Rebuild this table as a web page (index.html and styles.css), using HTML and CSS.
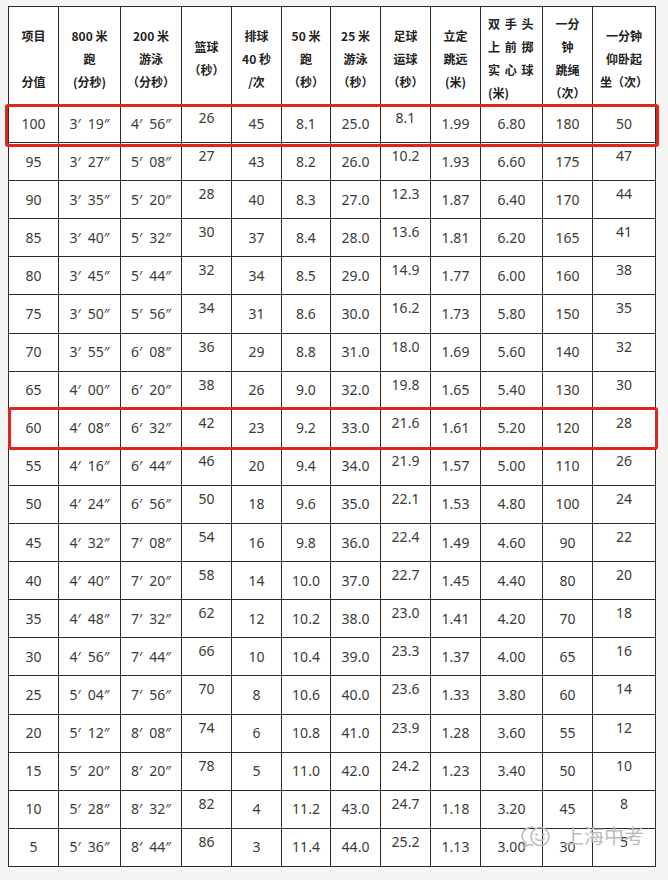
FILE: index.html
```html
<!DOCTYPE html>
<html lang="zh-CN">
<head>
<meta charset="utf-8">
<title>体育成绩评分标准</title>
<link rel="stylesheet" href="styles.css">
</head>
<body>
<div class="sheet">
<table class="score">
<colgroup>
<col class="w50"><col class="w62"><col class="w61"><col class="w50"><col class="w50"><col class="w49"><col class="w50"><col class="w50"><col class="w50"><col class="w62"><col class="w50"><col class="w63">
</colgroup>
<thead>
<tr>
<th>项目<br><br>分值</th>
<th>800 米<br>跑<br>(分秒)</th>
<th>200 米<br>游泳<br>（分秒）</th>
<th>篮球<br>（秒）</th>
<th>排球<br>40 秒<br>/次</th>
<th>50 米<br>跑<br>（秒）</th>
<th>25 米<br>游泳<br>（秒）</th>
<th>足球<br>运球<br>（秒）</th>
<th>立定<br>跳远<br>(米)</th>
<th class="left">双 手 头<br>上 前 掷<br>实 心 球<br>(米)</th>
<th>一分<br>钟<br>跳绳<br>（次）</th>
<th>一分钟<br>仰卧起<br>坐（次）</th>
</tr>
</thead>
<tbody>
<tr><td>100</td><td>3′&ensp;19″</td><td>4′&ensp;56″</td><td class="top">26</td><td>45</td><td>8.1</td><td>25.0</td><td class="top">8.1</td><td>1.99</td><td>6.80</td><td>180</td><td>50</td></tr>
<tr><td>95</td><td>3′&ensp;27″</td><td>5′&ensp;08″</td><td class="top">27</td><td>43</td><td>8.2</td><td>26.0</td><td class="top">10.2</td><td>1.93</td><td>6.60</td><td>175</td><td class="top">47</td></tr>
<tr><td>90</td><td>3′&ensp;35″</td><td>5′&ensp;20″</td><td class="top">28</td><td>40</td><td>8.3</td><td>27.0</td><td class="top">12.3</td><td>1.87</td><td>6.40</td><td>170</td><td class="top">44</td></tr>
<tr><td>85</td><td>3′&ensp;40″</td><td>5′&ensp;32″</td><td class="top">30</td><td>37</td><td>8.4</td><td>28.0</td><td class="top">13.6</td><td>1.81</td><td>6.20</td><td>165</td><td class="top">41</td></tr>
<tr><td>80</td><td>3′&ensp;45″</td><td>5′&ensp;44″</td><td class="top">32</td><td>34</td><td>8.5</td><td>29.0</td><td class="top">14.9</td><td>1.77</td><td>6.00</td><td>160</td><td class="top">38</td></tr>
<tr><td>75</td><td>3′&ensp;50″</td><td>5′&ensp;56″</td><td class="top">34</td><td>31</td><td>8.6</td><td>30.0</td><td class="top">16.2</td><td>1.73</td><td>5.80</td><td>150</td><td class="top">35</td></tr>
<tr><td>70</td><td>3′&ensp;55″</td><td>6′&ensp;08″</td><td class="top">36</td><td>29</td><td>8.8</td><td>31.0</td><td class="top">18.0</td><td>1.69</td><td>5.60</td><td>140</td><td class="top">32</td></tr>
<tr><td>65</td><td>4′&ensp;00″</td><td>6′&ensp;20″</td><td class="top">38</td><td>26</td><td>9.0</td><td>32.0</td><td class="top">19.8</td><td>1.65</td><td>5.40</td><td>130</td><td class="top">30</td></tr>
<tr><td>60</td><td>4′&ensp;08″</td><td>6′&ensp;32″</td><td class="top">42</td><td>23</td><td>9.2</td><td>33.0</td><td class="top">21.6</td><td>1.61</td><td>5.20</td><td>120</td><td class="top">28</td></tr>
<tr><td>55</td><td>4′&ensp;16″</td><td>6′&ensp;44″</td><td class="top">46</td><td>20</td><td>9.4</td><td>34.0</td><td class="top">21.9</td><td>1.57</td><td>5.00</td><td>110</td><td class="top">26</td></tr>
<tr><td>50</td><td>4′&ensp;24″</td><td>6′&ensp;56″</td><td class="top">50</td><td>18</td><td>9.6</td><td>35.0</td><td class="top">22.1</td><td>1.53</td><td>4.80</td><td>100</td><td class="top">24</td></tr>
<tr><td>45</td><td>4′&ensp;32″</td><td>7′&ensp;08″</td><td class="top">54</td><td>16</td><td>9.8</td><td>36.0</td><td class="top">22.4</td><td>1.49</td><td>4.60</td><td>90</td><td class="top">22</td></tr>
<tr><td>40</td><td>4′&ensp;40″</td><td>7′&ensp;20″</td><td class="top">58</td><td>14</td><td>10.0</td><td>37.0</td><td class="top">22.7</td><td>1.45</td><td>4.40</td><td>80</td><td class="top">20</td></tr>
<tr><td>35</td><td>4′&ensp;48″</td><td>7′&ensp;32″</td><td class="top">62</td><td>12</td><td>10.2</td><td>38.0</td><td class="top">23.0</td><td>1.41</td><td>4.20</td><td>70</td><td class="top">18</td></tr>
<tr><td>30</td><td>4′&ensp;56″</td><td>7′&ensp;44″</td><td class="top">66</td><td>10</td><td>10.4</td><td>39.0</td><td class="top">23.3</td><td>1.37</td><td>4.00</td><td>65</td><td class="top">16</td></tr>
<tr><td>25</td><td>5′&ensp;04″</td><td>7′&ensp;56″</td><td class="top">70</td><td>8</td><td>10.6</td><td>40.0</td><td class="top">23.6</td><td>1.33</td><td>3.80</td><td>60</td><td class="top">14</td></tr>
<tr><td>20</td><td>5′&ensp;12″</td><td>8′&ensp;08″</td><td class="top">74</td><td>6</td><td>10.8</td><td>41.0</td><td class="top">23.9</td><td>1.28</td><td>3.60</td><td>55</td><td class="top">12</td></tr>
<tr><td>15</td><td>5′&ensp;20″</td><td>8′&ensp;20″</td><td class="top">78</td><td>5</td><td>11.0</td><td>42.0</td><td class="top">24.2</td><td>1.23</td><td>3.40</td><td>50</td><td class="top">10</td></tr>
<tr><td>10</td><td>5′&ensp;28″</td><td>8′&ensp;32″</td><td class="top">82</td><td>4</td><td>11.2</td><td>43.0</td><td class="top">24.7</td><td>1.18</td><td>3.20</td><td>45</td><td class="top">8</td></tr>
<tr><td>5</td><td>5′&ensp;36″</td><td>8′&ensp;44″</td><td class="top">86</td><td>3</td><td>11.4</td><td>44.0</td><td class="top">25.2</td><td>1.13</td><td>3.00</td><td>30</td><td class="top">5</td></tr>
</tbody>
</table>
<div class="mark mark-100"></div>
<div class="mark mark-60"></div>
<div class="watermark">
<svg class="wm-icon" width="36" height="24" viewBox="0 0 36 24" aria-hidden="true">
<path d="M14 3 C7 3 3 7.5 3 12 C3 15 4.6 17.4 7 19 L6 22.5 L10 20.5 C11.3 20.9 12.6 21 14 21" fill="none" stroke="#bdbdbd" stroke-width="1.6" stroke-linecap="round"/>
<circle cx="21" cy="12.5" r="9" fill="none" stroke="#bdbdbd" stroke-width="1.6"/>
<circle cx="17.5" cy="10.5" r="1.2" fill="#bdbdbd"/>
<circle cx="24.5" cy="10.5" r="1.2" fill="#bdbdbd"/>
<path d="M16.5 14.5 Q21 18.5 25.5 14.5" fill="none" stroke="#bdbdbd" stroke-width="1.4" stroke-linecap="round"/>
</svg>
<span class="wm-text">上海中考</span>
</div>
</div>
</body>
</html>
```
FILE: styles.css
```css
html, body {
  margin: 0;
  padding: 0;
  background: #f5f5f3;
}

.sheet {
  position: relative;
  padding: 6px 0 0 8px;
  width: 660px;
  height: 874px;
}

.score {
  border-collapse: collapse;
  table-layout: fixed;
  width: 648px;
  background: #fff;
  font-family: "Noto Sans", "Noto Sans CJK SC", sans-serif;
  color: #3b3b36;
}

.w49 { width: 49px; }
.w50 { width: 50px; }
.w61 { width: 61px; }
.w62 { width: 62px; }
.w63 { width: 63px; }

.score th,
.score td {
  border: 1px solid #2a2a2a;
  padding: 0;
  text-align: center;
  vertical-align: middle;
}

.score thead tr {
  height: 97px;
}

.score th {
  font-family: "Noto Sans CJK SC", sans-serif;
  font-size: 12px;
  font-weight: bold;
  line-height: 23px;
  padding-top: 5px;
  color: #222;
}

.score th.left {
  text-align: left;
  padding-left: 7px;
  word-spacing: 2px;
}

.score tbody tr {
  height: 38.1px;
}

.score td {
  font-size: 14px;
  line-height: 20px;
  white-space: nowrap;
}

.score td.top {
  vertical-align: top;
  padding-top: 3px;
}

.mark {
  position: absolute;
  border: 3px solid #e0251f;
  border-radius: 3px;
  box-sizing: border-box;
}

.mark-100 {
  left: 5px;
  top: 104px;
  width: 654px;
  height: 43px;
}

.mark-60 {
  left: 8px;
  top: 407px;
  width: 650px;
  height: 43px;
}

.watermark {
  position: absolute;
  left: 519px;
  top: 823px;
  display: flex;
  align-items: center;
  gap: 9px;
}

.wm-text {
  font-family: "Noto Sans CJK SC", sans-serif;
  font-size: 20px;
  color: #bdbdbd;
  line-height: 26px;
}
```
